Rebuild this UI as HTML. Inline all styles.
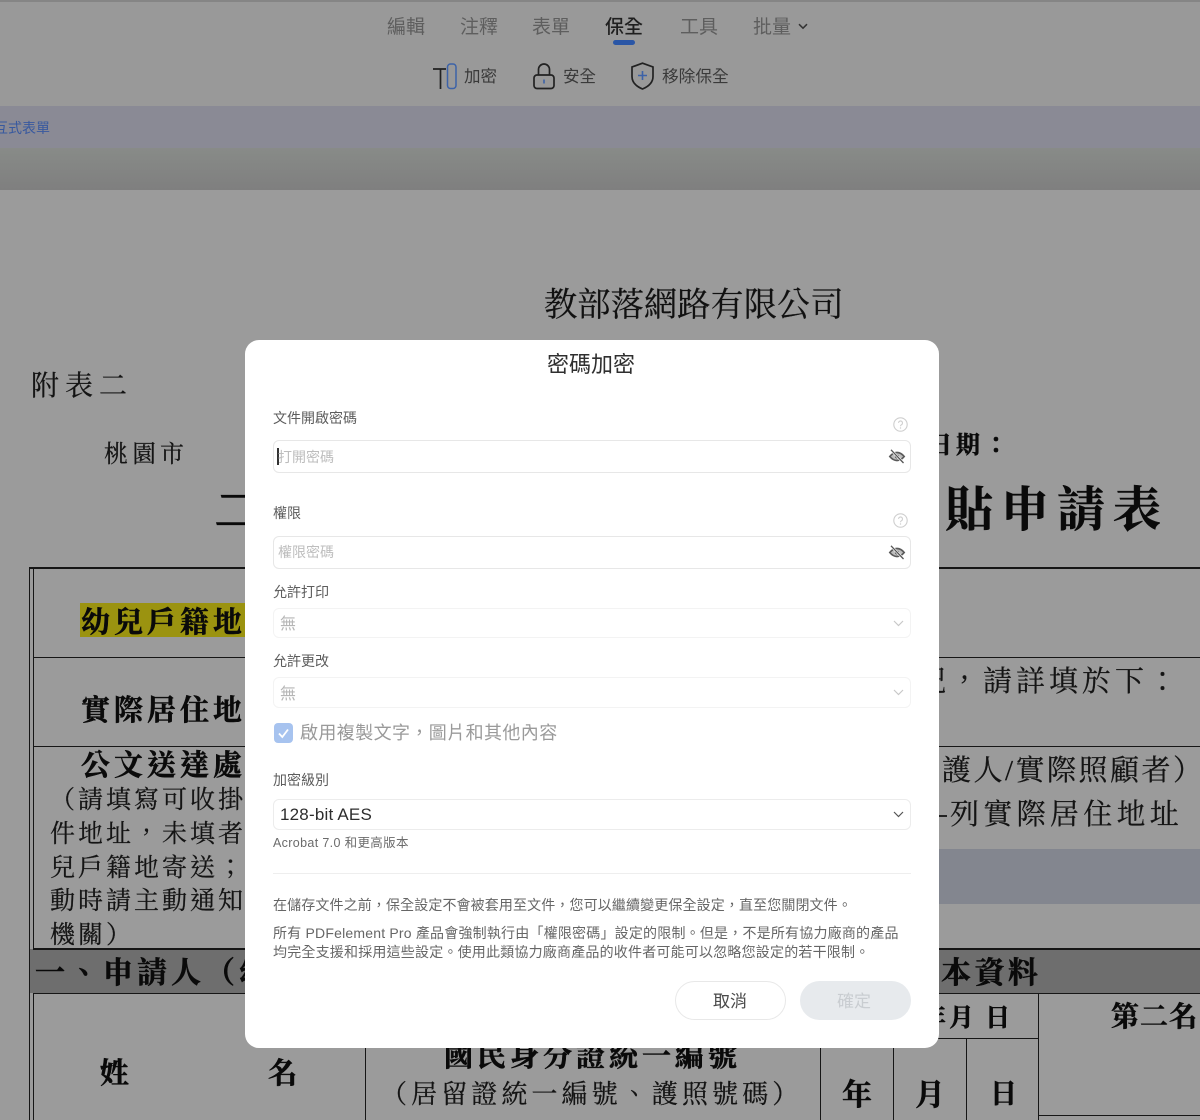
<!DOCTYPE html>
<html lang="zh-Hant">
<head>
<meta charset="utf-8">
<title>密碼加密</title>
<style>
html,body{margin:0;padding:0}
body{width:1200px;height:1120px;overflow:hidden;position:relative;background:#9b9b9b;font-family:"Liberation Sans","Noto Sans CJK TC",sans-serif}
.t{position:absolute;white-space:nowrap;line-height:1}
.s{font-family:"Liberation Serif","Noto Serif CJK SC",serif;color:#141414;-webkit-text-stroke:.25px #141414}
.b{font-weight:700;color:#0a0a0a;-webkit-text-stroke:.5px #0a0a0a}
.l{position:absolute;background:#161616}
svg{position:absolute;overflow:visible}
.tab{font-size:19px;color:#5e5e5e}
#modal{position:absolute;left:245px;top:340px;width:694px;height:708px;background:#fff;border-radius:14px}
#modal .t{color:#5c5c5c}
.box{position:absolute;left:28px;width:636px;background:#fff;border:1px solid #e7e7e7;border-radius:6px}
.sel{border-color:#f3f3f3}
.btn{position:absolute;top:641px;width:111px;height:39px;border-radius:20px;box-sizing:border-box}
</style>
</head>
<body>
<!-- header -->
<div style="position:absolute;left:0;top:0;width:1200px;height:2px;background:#858585"></div>
<div style="position:absolute;left:0;top:2px;width:1200px;height:104px;background:#999"></div>
<div class="t tab" style="left:387px;top:18px">編輯</div>
<div class="t tab" style="left:460px;top:18px">注釋</div>
<div class="t tab" style="left:532px;top:18px">表單</div>
<div class="t tab" style="left:605px;top:18px;color:#1f1f1f;font-weight:500">保全</div>
<div class="t tab" style="left:680px;top:18px">工具</div>
<div class="t tab" style="left:753px;top:18px">批量</div>
<svg style="left:798px;top:23px" width="10" height="7" viewBox="0 0 10 7"><path d="M1 1.200 5 5.200 9 1.200" fill="none" stroke="#333" stroke-width="1.500"/></svg>
<div style="position:absolute;left:613px;top:40px;width:22px;height:5px;border-radius:3px;background:#2a56a6"></div>

<svg style="left:433px;top:63px" width="24" height="27" viewBox="0 0 24 27"><path d="M0 6H13M7.500 6V26" fill="none" stroke="#222" stroke-width="1.700"/><rect x="14.500" y="1" width="8.500" height="24.500" rx="3" fill="none" stroke="#3c62a8" stroke-width="1.500"/></svg>
<div class="t" style="left:464px;top:69px;font-size:16.500px;color:#3a3a3a">加密</div>
<svg style="left:533px;top:63px" width="22" height="26" viewBox="0 0 22 26"><path d="M5.500 12V6.500a5.500 5.500 0 0 1 11 0V12" fill="none" stroke="#222" stroke-width="1.700"/><rect x="1" y="12" width="20" height="13.500" rx="3" fill="none" stroke="#222" stroke-width="1.700"/><path d="M11 16.500v4" stroke="#3c62a8" stroke-width="1.600"/></svg>
<div class="t" style="left:563px;top:69px;font-size:16.500px;color:#3a3a3a">安全</div>
<svg style="left:631px;top:62px" width="23" height="28" viewBox="0 0 23 28"><path d="M11.500 1.200 22 5v9.500c0 6-4.500 10-10.500 12.500C5.500 24.500 1 20.500 1 14.500V5Z" fill="none" stroke="#222" stroke-width="1.700"/><path d="M11.500 9v9M7 13.500h9" stroke="#3c62a8" stroke-width="1.600"/></svg>
<div class="t" style="left:662px;top:69px;font-size:16.700px;color:#3a3a3a">移除保全</div>

<div style="position:absolute;left:0;top:106px;width:1200px;height:42px;background:#8a8a95"></div>
<div class="t" style="left:-6px;top:120.500px;font-size:14px;color:#38599f">互式表單</div>
<div style="position:absolute;left:0;top:148px;width:1200px;height:42px;background:linear-gradient(#888b88,#7f7f7f)"></div>

<!-- document -->
<div class="t s" style="left:544px;top:289px;font-size:33.300px;color:#111">教部落網路有限公司</div>
<div class="t s" style="left:31px;top:373px;font-size:28px;letter-spacing:6px">附表二</div>
<div class="t s" style="left:104px;top:443px;font-size:24px;letter-spacing:4px">桃園市</div>
<div class="t s b" style="left:215px;top:488px;font-size:48px;-webkit-text-stroke:1.500px #0a0a0a">二</div>
<div class="t s b" style="left:928px;top:434px;font-size:24px;letter-spacing:4px">日期：</div>
<div class="t s b" style="left:945px;top:487px;font-size:48px;letter-spacing:8px">貼申請表</div>

<div class="l" style="left:29px;top:567px;width:1171px;height:2px"></div>
<div class="l" style="left:29px;top:567px;width:1px;height:553px"></div>
<div class="l" style="left:33px;top:567px;width:1px;height:553px"></div>
<div class="l" style="left:33px;top:657px;width:1167px;height:1px"></div>
<div class="l" style="left:33px;top:746px;width:1167px;height:1px"></div>

<div style="position:absolute;left:80px;top:603px;width:170px;height:34px;background:#9b9310"></div>
<div class="t s b" style="left:81px;top:609px;font-size:29px;letter-spacing:4px">幼兒戶籍地</div>
<div class="t s b" style="left:81px;top:697px;font-size:29px;letter-spacing:4px">實際居住地</div>
<div class="t s b" style="left:81px;top:752px;font-size:29px;letter-spacing:4px">公文送達處</div>
<div class="t s" style="left:50px;top:788px;font-size:25px;letter-spacing:3px">（請填寫可收掛</div>
<div class="t s" style="left:50px;top:822px;font-size:25px;letter-spacing:3px">件地址，未填者</div>
<div class="t s" style="left:50px;top:856px;font-size:25px;letter-spacing:3px">兒戶籍地寄送；</div>
<div class="t s" style="left:50px;top:889px;font-size:25px;letter-spacing:3px">動時請主動通知</div>
<div class="t s" style="left:50px;top:923px;font-size:25px;letter-spacing:3px">機關）</div>

<div style="position:absolute;left:30px;top:949px;width:1170px;height:44px;background:#6e6e6e"></div>
<div class="l" style="left:33px;top:948px;width:1167px;height:2px"></div>
<div class="l" style="left:33px;top:993px;width:1167px;height:1px"></div>
<div class="t s b" style="left:35px;top:959px;font-size:30px;letter-spacing:4px">一、申請人（幼</div>
<div class="t s b" style="left:941px;top:959px;font-size:30px;letter-spacing:3.500px">本資料</div>

<div style="position:absolute;left:939px;top:849px;width:261px;height:55px;background:#83868f"></div>
<div class="t s" style="left:917px;top:668px;font-size:29px;letter-spacing:4px">況，請詳填於下：</div>
<div class="t s" style="left:942px;top:757px;font-size:29px;letter-spacing:2.500px">護人/實際照顧者）</div>
<div class="t s" style="left:950px;top:801px;font-size:29px;letter-spacing:4.300px">列實際居住地址</div>
<div style="position:absolute;left:939px;top:815px;width:8px;height:2px;background:#222"></div>

<div class="t s b" style="left:100px;top:1060px;font-size:29px">姓</div>
<div class="t s b" style="left:268px;top:1060px;font-size:29px">名</div>
<div class="l" style="left:365px;top:1040px;width:1px;height:80px"></div>
<div class="l" style="left:820px;top:1040px;width:1px;height:80px"></div>
<div class="l" style="left:893px;top:1038px;width:1px;height:82px"></div>
<div class="l" style="left:966px;top:1038px;width:1px;height:82px"></div>
<div class="l" style="left:1038px;top:993px;width:1px;height:127px"></div>
<div class="l" style="left:820px;top:1038px;width:218px;height:1px"></div>
<div class="l" style="left:1038px;top:1115px;width:162px;height:1px"></div>
<div class="t s b" style="left:444px;top:1043px;font-size:29px;letter-spacing:4px">國民身分證統一編號</div>
<div class="t s" style="left:381px;top:1082px;font-size:26px;letter-spacing:4.100px">（居留證統一編號、護照號碼）</div>
<div class="t s b" style="left:842px;top:1081px;font-size:30px">年</div>
<div class="t s b" style="left:915px;top:1081px;font-size:30px">月</div>
<div class="t s b" style="left:990px;top:1081px;font-size:27px">日</div>
<div class="t s b" style="left:921px;top:1006px;font-size:25px">年</div>
<div class="t s b" style="left:949px;top:1006px;font-size:25px">月</div>
<div class="t s b" style="left:985px;top:1006px;font-size:25px">日</div>
<div class="t s b" style="left:1111px;top:1004px;font-size:28px;letter-spacing:1px">第二名</div>

<!-- modal -->
<div id="modal">
  <div class="t" style="left:302px;top:14px;font-size:22px;color:#2f2f2f!important">密碼加密</div>

  <div class="t" style="left:28px;top:70.500px;font-size:14px">文件開啟密碼</div>
  <svg style="left:648px;top:77px" width="15" height="15" viewBox="0 0 15 15"><circle cx="7.500" cy="7.500" r="6.700" fill="none" stroke="#cfcfcf" stroke-width="1.100"/><path d="M5.500 5.900a2 2 0 1 1 3 1.800c-.7.400-1 .8-1 1.500" fill="none" stroke="#cfcfcf" stroke-width="1.100"/><circle cx="7.500" cy="11" r=".7" fill="#cfcfcf"/></svg>
  <div class="box" style="top:100px;height:31px"></div>
  <div style="position:absolute;left:32px;top:108px;width:1.500px;height:17px;background:#333"></div>
  <div class="t" style="left:33px;top:110px;font-size:14px;color:#bdbdbd!important">打開密碼</div>
  <svg style="left:644px;top:109px" width="16" height="15" viewBox="0 0 16 15"><path d="M.8 7.500C3 4.800 5.400 3.500 8 3.500s5 1.300 7.200 4C13 10.200 10.600 11.500 8 11.500S3 10.200.8 7.500Z" fill="#bdbdbd" stroke="#5a5a5a" stroke-width="1.700"/><circle cx="8" cy="7.500" r="2" fill="#5a5a5a"/><path d="M2 .8 14.500 14" stroke="#fff" stroke-width="2.600"/><path d="M2 .8 14.500 14" stroke="#555" stroke-width="1.300"/></svg>

  <div class="t" style="left:28px;top:166px;font-size:14px">權限</div>
  <svg style="left:648px;top:173px" width="15" height="15" viewBox="0 0 15 15"><circle cx="7.500" cy="7.500" r="6.700" fill="none" stroke="#cfcfcf" stroke-width="1.100"/><path d="M5.500 5.900a2 2 0 1 1 3 1.800c-.7.400-1 .8-1 1.500" fill="none" stroke="#cfcfcf" stroke-width="1.100"/><circle cx="7.500" cy="11" r=".7" fill="#cfcfcf"/></svg>
  <div class="box" style="top:196px;height:31px"></div>
  <div class="t" style="left:33px;top:205px;font-size:14px;color:#bdbdbd!important">權限密碼</div>
  <svg style="left:644px;top:205px" width="16" height="15" viewBox="0 0 16 15"><path d="M.8 7.500C3 4.800 5.400 3.500 8 3.500s5 1.300 7.200 4C13 10.200 10.600 11.500 8 11.500S3 10.200.8 7.500Z" fill="#bdbdbd" stroke="#5a5a5a" stroke-width="1.700"/><circle cx="8" cy="7.500" r="2" fill="#5a5a5a"/><path d="M2 .8 14.500 14" stroke="#fff" stroke-width="2.600"/><path d="M2 .8 14.500 14" stroke="#555" stroke-width="1.300"/></svg>

  <div class="t" style="left:28px;top:245px;font-size:14px">允許打印</div>
  <div class="box sel" style="top:268px;height:28px"></div>
  <div class="t" style="left:35px;top:277px;font-size:16px;color:#b5b5b5!important">無</div>
  <svg style="left:648px;top:280px" width="11" height="7" viewBox="0 0 11 7"><path d="M1 1 5.500 5.500 10 1" fill="none" stroke="#c8c8c8" stroke-width="1.200"/></svg>

  <div class="t" style="left:28px;top:314px;font-size:14px">允許更改</div>
  <div class="box sel" style="top:337px;height:29px"></div>
  <div class="t" style="left:35px;top:347px;font-size:16px;color:#b5b5b5!important">無</div>
  <svg style="left:648px;top:349px" width="11" height="7" viewBox="0 0 11 7"><path d="M1 1 5.500 5.500 10 1" fill="none" stroke="#c8c8c8" stroke-width="1.200"/></svg>

  <div style="position:absolute;left:29px;top:383px;width:19px;height:20px;border-radius:4px;background:#a7c3ef"></div>
  <svg style="left:29px;top:383px" width="19" height="20" viewBox="0 0 19 20"><path d="M5 10.500 8.300 14 14 6.500" fill="none" stroke="#fff" stroke-width="1.800"/></svg>
  <div class="t" style="left:55px;top:384px;font-size:18px;letter-spacing:.4px;color:#9a9a9a!important">啟用複製文字，圖片和其他內容</div>

  <div class="t" style="left:28px;top:433px;font-size:14px">加密級別</div>
  <div class="box" style="top:459px;height:29px;border-color:#ececec"></div>
  <div class="t" style="left:35px;top:466px;font-size:17px;letter-spacing:.2px;color:#2d2d2d!important">128-bit AES</div>
  <svg style="left:648px;top:471px" width="11" height="7" viewBox="0 0 11 7"><path d="M1 1 5.500 5.500 10 1" fill="none" stroke="#555" stroke-width="1.200"/></svg>
  <div class="t" style="left:28px;top:497px;font-size:12.500px;letter-spacing:.35px;color:#6b6b6b!important">Acrobat 7.0 和更高版本</div>

  <div style="position:absolute;left:28px;top:533px;width:638px;height:1px;background:#eeeeee"></div>

  <div class="t" style="left:28px;top:557.500px;font-size:14px;letter-spacing:.12px;color:#666!important">在儲存文件之前，保全設定不會被套用至文件，您可以繼續變更保全設定，直至您關閉文件。</div>
  <div class="t" style="left:28px;top:586px;font-size:14px;letter-spacing:.2px;color:#666!important">所有 PDFelement Pro 產品會強制執行由「權限密碼」設定的限制。但是，不是所有協力廠商的產品</div>
  <div class="t" style="left:28px;top:605px;font-size:14px;letter-spacing:.2px;color:#666!important">均完全支援和採用這些設定。使用此類協力廠商產品的收件者可能可以忽略您設定的若干限制。</div>

  <div class="btn" style="left:430px;background:#fff;border:1px solid #e8e8e8"></div>
  <div class="t" style="left:468px;top:652.500px;font-size:17px;color:#4a4a4a!important">取消</div>
  <div class="btn" style="left:555px;background:#e7eaed"></div>
  <div class="t" style="left:592px;top:652.500px;font-size:17px;color:#c9cdd1!important">確定</div>
</div>
</body>
</html>
